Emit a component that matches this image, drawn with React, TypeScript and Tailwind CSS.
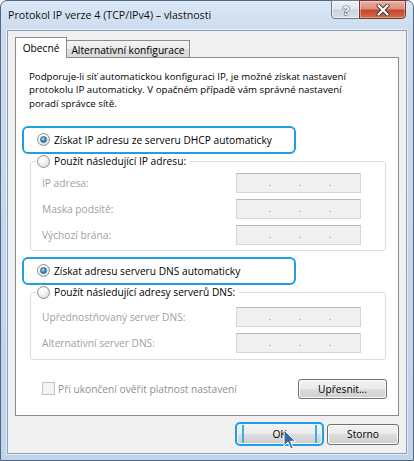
import type { ReactNode } from 'react'

function Radio({ checked = false }: { checked?: boolean }) {
  return (
    <span className="flex h-[13px] w-[13px] shrink-0 items-center justify-center rounded-full border border-[#8e8f8f] bg-[radial-gradient(circle_at_35%_30%,#ffffff_0%,#f4f4f4_40%,#d2d2d2_100%)]">
      {checked && (
        <span className="h-[7px] w-[7px] rounded-full border border-[#2c628b] bg-[radial-gradient(circle_at_40%_35%,#b8e8ff_0%,#3d98d8_45%,#0f4f8c_100%)]" />
      )}
    </span>
  )
}

function IpBox() {
  return (
    <div className="flex h-[20px] w-[125px] items-center gap-[28px] border border-[#d6d6d6] border-t-[#b8b8b8] bg-[#f0f0f0] pl-[32px] text-[9.5px] leading-[18px] text-[#8a8a8a]">
      <span className="flex w-[2px] justify-center pt-[1px]">.</span>
      <span className="flex w-[2px] justify-center pt-[1px]">.</span>
      <span className="flex w-[2px] justify-center pt-[1px]">.</span>
    </div>
  )
}

function FieldRow({ label }: { label: string }) {
  return (
    <div className="flex h-[20px] items-center">
      <span className="w-[200px] pl-[6px] text-[#a0a0a0]">{label}</span>
      <IpBox />
    </div>
  )
}

function Callout({ children }: { children: ReactNode }) {
  return (
    <div className="ml-[6px] flex h-[28px] w-[274px] items-center gap-[4px] rounded-[6px] border-2 border-[#1f9fe2] bg-white pl-[13px]">
      {children}
    </div>
  )
}

function WinButton({ children, className = '' }: { children: ReactNode; className?: string }) {
  return (
    <button
      className={
        'flex items-center justify-center rounded-[3px] border border-[#707070] bg-[linear-gradient(180deg,#f2f2f2_0%,#ebebeb_49%,#dddddd_50%,#cfcfcf_100%)] text-black shadow-[inset_0_0_0_1px_#fbfbfb] ' +
        className
      }
    >
      {children}
    </button>
  )
}

export default function App() {
  return (
    <div className="h-[461px] w-[414px] bg-white font-['Open_Sans','Noto_Sans',sans-serif] text-[10.2px] leading-[14px] text-black">
      <div className="relative flex h-[461px] w-[414px] flex-col rounded-t-[7px] border border-[#52667f] bg-[linear-gradient(180deg,#dae7f5_0%,#cbdcef_30px,#bfd3ea_100%)] px-[6px] pb-[6px]">
        {/* title bar */}
        <div className="flex h-[29px] shrink-0 items-start">
          <span className="self-center pb-[1px] pl-[1px] text-[10.65px] text-[#111]">
            Protokol IP verze 4 (TCP/IPv4) – vlastnosti
          </span>
          <div className="-mt-[1px] mr-[1px] ml-auto flex h-[19px]">
            <div className="flex w-[29px] items-center justify-center rounded-bl-[4px] border border-[#6c7b90] bg-[linear-gradient(180deg,#eef2f7_0%,#dfe6ee_45%,#c9d3de_55%,#d6dee8_100%)] shadow-[inset_0_0_0_1px_rgba(255,255,255,0.6)]">
              <svg width="12" height="14" viewBox="0 0 12 14">
                <text
                  x="6"
                  y="12"
                  textAnchor="middle"
                  fontSize="13"
                  fontWeight="700"
                  fontFamily="Liberation Sans, sans-serif"
                  fill="#ffffff"
                  stroke="#4a5566"
                  strokeWidth="1"
                  paintOrder="stroke"
                >
                  ?
                </text>
              </svg>
            </div>
            <div className="-ml-[1px] flex w-[47px] items-center justify-center rounded-br-[4px] border border-[#6e3a30] bg-[linear-gradient(180deg,#eab3a6_0%,#de8d78_45%,#c7472b_55%,#d4694d_100%)] shadow-[inset_0_0_0_1px_rgba(255,255,255,0.35)]">
              <svg width="14" height="12" viewBox="0 0 14 12">
                <path d="M2.5 1.5 L11.5 10.5 M11.5 1.5 L2.5 10.5" stroke="#3b3b3b" strokeWidth="4" strokeLinecap="round" />
                <path d="M2.5 1.5 L11.5 10.5 M11.5 1.5 L2.5 10.5" stroke="#ffffff" strokeWidth="2.2" strokeLinecap="round" />
              </svg>
            </div>
          </div>
        </div>

        {/* client area */}
        <div className="flex h-[424px] flex-col border border-[#8d9db3] bg-[#f0f0f0] pt-[6px] pl-[7px] shadow-[0_0_0_1px_rgba(255,255,255,0.55)]">
          {/* tabs */}
          <div className="flex h-[20px] items-end">
            <div className="relative z-10 -mb-[1px] flex h-[21px] w-[52px] items-center justify-center border border-b-0 border-[#898c95] bg-white pb-[1px]">
              Obecné
            </div>
            <div className="-ml-[1px] flex h-[17px] w-[124px] items-center justify-center border border-b-0 border-[#898c95] bg-[linear-gradient(180deg,#f3f3f3_0%,#ebebeb_50%,#dedede_51%,#d9d9d9_100%)] pt-[1px]">
              Alternativní konfigurace
            </div>
          </div>

          {/* tab page */}
          <div className="flex h-[359px] w-[384px] flex-col border border-[#898c95] bg-white">
            <p className="pt-[12px] pl-[13px] text-[9.7px] leading-[13.3px]">
              Podporuje-li síť automatickou konfiguraci IP, je možné získat nastavení
              <br />
              protokolu IP automaticky. V opačném případě vám správné nastavení
              <br />
              poradí správce sítě.
            </p>

            <div className="mt-[16px]">
              <Callout>
                <Radio checked />
                <span>Získat IP adresu ze serveru DHCP automaticky</span>
              </Callout>
            </div>

            <fieldset className="ml-[14px] w-[356px] rounded-[3px] border border-[#d5dfe5] pb-[5px] pl-[5px]">
              <legend className="flex h-[15px] items-center gap-[4px] pr-[4px] pl-[1px]">
                <Radio />
                <span>Použít následující IP adresu:</span>
              </legend>
              <div className="flex flex-col gap-[6px] pt-[4px]">
                <FieldRow label="IP adresa:" />
                <FieldRow label="Maska podsítě:" />
                <FieldRow label="Výchozí brána:" />
              </div>
            </fieldset>

            <div className="mt-[6px]">
              <Callout>
                <Radio checked />
                <span>Získat adresu serveru DNS automaticky</span>
              </Callout>
            </div>

            <fieldset className="ml-[14px] w-[356px] rounded-[3px] border border-[#d5dfe5] pb-[6px] pl-[5px]">
              <legend className="flex h-[15px] items-center gap-[4px] pr-[4px] pl-[1px]">
                <Radio />
                <span>Použít následující adresy serverů DNS:</span>
              </legend>
              <div className="flex flex-col gap-[6px] pt-[7px]">
                <FieldRow label="Upřednostňovaný server DNS:" />
                <FieldRow label="Alternativní server DNS:" />
              </div>
            </fieldset>

            <div className="mt-[19px] flex h-[20px] items-center justify-between pr-[11px] pl-[26px]">
              <div className="flex items-center gap-[3px] text-[#8f8f8f]">
                <span className="h-[13px] w-[13px] border border-[#c4c4c4] bg-[#f4f4f4]" />
                <span>Při ukončení ověřit platnost nastavení</span>
              </div>
              <WinButton className="h-[20px] w-[89px]">Upřesnit...</WinButton>
            </div>
          </div>

          {/* dialog buttons */}
          <div className="mt-[6px] flex items-center justify-end gap-[3px] pr-[7px]">
            <div className="flex h-[24px] w-[89px] rounded-[5px] border-2 border-[#1f9fe2] bg-[#eef6fb] p-[1px]">
              <div className="flex flex-1 rounded-[3px] bg-[linear-gradient(180deg,#f2f2f2_0%,#ebebeb_49%,#dddddd_50%,#cfcfcf_100%)] px-[4px]">
                <div className="flex flex-1 items-center justify-center border-x-2 border-[#3aaee8]">OK</div>
              </div>
            </div>
            <WinButton className="h-[21px] w-[72px]">Storno</WinButton>
          </div>
        </div>

        {/* mouse pointer */}
        <svg className="absolute top-[428px] left-[282px]" width="13" height="22" viewBox="0 0 13 22">
          <path
            d="M1 1 L1 17 L5 13.2 L7.8 19.8 L10.2 18.8 L7.5 12.3 L12.5 12.3 Z"
            fill="#3b6a9a"
            stroke="#ffffff"
            strokeWidth="1"
            strokeLinejoin="round"
          />
        </svg>
      </div>
    </div>
  )
}
